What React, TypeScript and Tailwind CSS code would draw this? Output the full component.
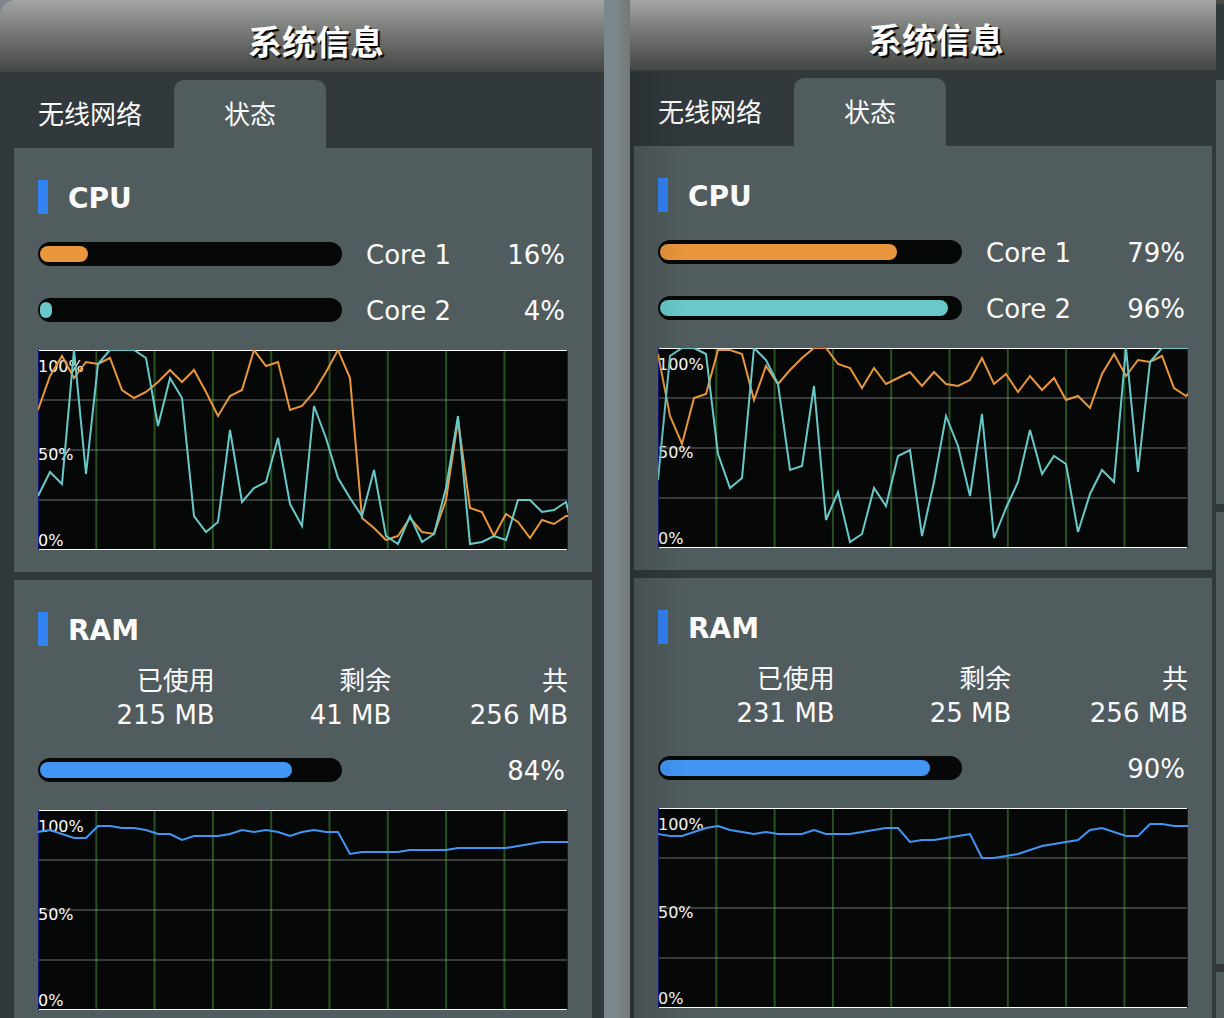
type Series = { color: string; values: number[] };
type Meter = { label?: string; value: number; fill: string };

type PanelData = {
  cores: Meter[];
  cpuSeries: Series[];
  ram: { used: string; free: string; total: string; percent: number };
  ramSeries: Series[];
};

const ORANGE = '#ea963c';
const TEAL = '#68c9c9';
const BLUE = '#4295f3';

const panels: PanelData[] = [
  {
    cores: [
      { label: 'Core 1', value: 16, fill: ORANGE },
      { label: 'Core 2', value: 4, fill: TEAL },
    ],
    cpuSeries: [
      {
        color: ORANGE,
        values: [
          70, 87, 97, 86, 94, 93, 96, 80, 76, 79, 84, 90, 84, 90, 79, 67, 77, 80, 100, 92, 94, 70, 72, 79, 89,
          100, 86, 16, 11, 5, 7, 16, 9, 8, 25, 65, 21, 19, 7, 18, 14, 6, 15, 13, 17, 17,
        ],
      },
      {
        color: TEAL,
        values: [
          27, 39, 33, 100, 38, 93, 100, 100, 100, 96, 62, 86, 76, 17, 9, 14, 60, 24, 31, 34, 56, 23, 12, 72, 56,
          36, 26, 17, 40, 7, 3, 17, 4, 8, 31, 67, 3, 4, 7, 5, 25, 25, 19, 20, 24, 0,
        ],
      },
    ],
    ram: { used: '215 MB', free: '41 MB', total: '256 MB', percent: 84 },
    ramSeries: [
      {
        color: BLUE,
        values: [
          89, 90, 88, 86, 86, 92, 92, 91, 91, 90, 88, 88, 85, 87, 87, 87, 88, 90, 89, 90, 89, 87, 89, 90, 89, 89,
          78, 79, 79, 79, 79, 80, 80, 80, 80, 81, 81, 81, 81, 81, 82, 83, 84, 84, 84, 84,
        ],
      },
    ],
  },
  {
    cores: [
      { label: 'Core 1', value: 79, fill: ORANGE },
      { label: 'Core 2', value: 96, fill: TEAL },
    ],
    cpuSeries: [
      {
        color: ORANGE,
        values: [
          97, 66, 52, 75, 77, 99, 99, 97, 74, 91, 82, 89, 95, 100, 100, 92, 90, 80, 90, 82, 85, 88, 81, 88, 82,
          81, 84, 95, 82, 87, 78, 86, 79, 85, 74, 76, 70, 87, 97, 86, 94, 93, 96, 80, 76, 82,
        ],
      },
      {
        color: TEAL,
        values: [
          34, 96, 100, 100, 97, 47, 30, 35, 100, 94, 82, 39, 41, 81, 14, 28, 3, 7, 30, 21, 46, 49, 6, 33, 66, 51,
          26, 67, 5, 20, 33, 59, 37, 46, 42, 8, 27, 39, 33, 100, 38, 93, 100, 100, 100, 100,
        ],
      },
    ],
    ram: { used: '231 MB', free: '25 MB', total: '256 MB', percent: 90 },
    ramSeries: [
      {
        color: BLUE,
        values: [
          87, 86, 86, 88, 90, 91, 89, 88, 87, 88, 87, 87, 87, 89, 87, 87, 87, 88, 89, 90, 90, 83, 84, 84, 85, 86,
          87, 75, 75, 76, 77, 79, 81, 82, 83, 84, 89, 90, 88, 86, 86, 92, 92, 91, 91, 91,
        ],
      },
    ],
  },
];

function Chart({ name, series }: { name: string; series: Series[] }) {
  return (
    <svg
      role="img"
      aria-label={name}
      viewBox="0 0 530 200"
      className="mt-3 block h-auto w-full overflow-hidden"
      fontFamily='"DejaVu Sans", sans-serif'
      fontSize="16"
    >
      <rect width="530" height="200" fill="#060807" />
      {[50, 100, 150].map((y) => (
        <line key={y} x1="0" x2="530" y1={y} y2={y} stroke="#ffffff" strokeOpacity="0.21" strokeWidth="2" />
      ))}
      {[1, 2, 3, 4, 5, 6, 7, 8].map((n) => (
        <line
          key={n}
          x1={n * 58.3}
          x2={n * 58.3}
          y1="0"
          y2="200"
          stroke="#5cbe46"
          strokeOpacity="0.4"
          strokeWidth="2"
        />
      ))}
      <path d="M0.5 0V200M529.5 0V200" stroke="#10127c" />
      <path d="M1 0.5H529M1 199.5H529" stroke="#ffffff" />
      <g fill="#fafafa">
        <text x="0" y="22">100%</text>
        <text x="0" y="110">50%</text>
        <text x="0" y="196">0%</text>
      </g>
      {series.map((s) => (
        <polyline
          key={s.color}
          points={s.values.map((v, i) => `${i * 12},${200 - v * 2}`).join(' ')}
          fill="none"
          stroke={s.color}
          strokeWidth="2"
        />
      ))}
    </svg>
  );
}

function MeterRow({ meter, name }: { meter: Meter; name: string }) {
  return (
    <div className="flex h-14 items-center">
      <div
        role="progressbar"
        aria-label={name}
        aria-valuenow={meter.value}
        aria-valuemin={0}
        aria-valuemax={100}
        className="h-6 w-[304px] shrink-0 rounded-full bg-[#060807] px-0.5 py-1"
      >
        <div className="h-full rounded-full" style={{ width: `${meter.value}%`, backgroundColor: meter.fill }} />
      </div>
      <span className="ml-6 pt-0.5 whitespace-nowrap">{meter.label}</span>
      <span className="ml-auto pt-0.5 pr-[3px]">{meter.value}%</span>
    </div>
  );
}

function Heading({ children }: { children: string }) {
  return (
    <h2 className="flex h-[34px] items-center border-l-10 border-[#3282f2] pt-[3px] pl-5 text-[28px] font-bold">
      {children}
    </h2>
  );
}

function Panel({ data, frame, bar }: { data: PanelData; frame: string; bar: string }) {
  const tab = 'h-17 rounded-t-[10px] px-6 pt-[3px]';
  return (
    <section className="min-w-0">
      <header className={`flex items-end justify-center bg-linear-to-b from-[#a3a5a3] to-[#444644] pb-3 ${bar}`}>
        <h1 className="text-[34px] leading-[34px] font-bold text-shadow-[2px_2px_1px_#000000]">系统信息</h1>
      </header>
      <div className={`bg-[#31393c] ${frame}`}>
        <div role="tablist" className="flex gap-2 pt-2">
          <button role="tab" aria-selected="false" className={tab}>
            无线网络
          </button>
          <button role="tab" aria-selected="true" className={`${tab} w-[152px] bg-[#515c5e]`}>
            状态
          </button>
        </div>
        <div className="flex flex-col gap-2">
          <article className="bg-[#515c5e] px-6 pt-8 pb-[22px]">
            <Heading>CPU</Heading>
            <div className="mt-3">
              {data.cores.map((core) => (
                <MeterRow key={core.label} meter={core} name={core.label ?? ''} />
              ))}
            </div>
            <Chart name="CPU" series={data.cpuSeries} />
          </article>
          <article className="bg-[#515c5e] px-6 pt-8 pb-[22px]">
            <Heading>RAM</Heading>
            <table className="mt-[18px] mb-2.5 w-full table-fixed text-right leading-[34px]">
              <thead>
                <tr>
                  <th className="font-normal">已使用</th>
                  <th className="font-normal">剩余</th>
                  <th className="font-normal">共</th>
                </tr>
              </thead>
              <tbody>
                <tr>
                  <td>{data.ram.used}</td>
                  <td>{data.ram.free}</td>
                  <td>{data.ram.total}</td>
                </tr>
              </tbody>
            </table>
            <MeterRow meter={{ value: data.ram.percent, fill: BLUE }} name="RAM" />
            <Chart name="RAM" series={data.ramSeries} />
          </article>
        </div>
      </div>
    </section>
  );
}

export default function App() {
  return (
    <main className='grid h-screen grid-cols-[604fr_26px_586fr_8px] overflow-hidden bg-[#7c868b] font-["DejaVu_Sans","Noto_Sans_CJK_SC",sans-serif] text-[26px] text-[#fafafa]'>
      <Panel data={panels[0]} frame="pr-3 pl-3.5" bar="h-18 rounded-tl-2xl pl-7" />
      <div className="bg-linear-to-r from-[#7c878d] from-50% to-[#737877]" />
      <div className="relative grid">
        <Panel data={panels[1]} frame="px-1" bar="h-[70px] pl-[26px]" />
        <div className="pointer-events-none absolute top-18 bottom-0 left-0 w-14 bg-linear-to-r from-black/14 to-transparent" />
      </div>
      <div className="flex flex-col gap-2 bg-[#31393c]">
        <div className="h-1 bg-[#484a48]" />
        <div className="mt-17 h-[424px] bg-[#515c5e]" />
        <div className="h-[452px] bg-[#515c5e]" />
        <div className="flex-1 bg-[#515c5e]" />
      </div>
    </main>
  );
}
